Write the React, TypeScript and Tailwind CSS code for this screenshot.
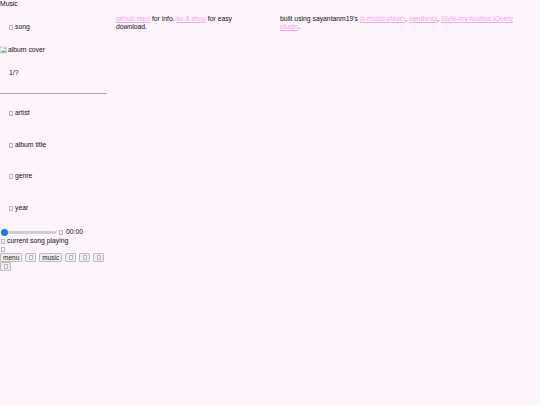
import React from 'react';

const Tofu: React.FC<{ className?: string }> = ({ className = '' }) => (
  <span className={`inline-block w-[4px] h-[5px] border-[0.8px] border-[#bdb6bd] align-[-1px] ${className}`} />
);

const BrokenImage: React.FC = () => (
  <svg width="8" height="8" viewBox="0 0 16 16" className="inline-block align-[-1px]">
    <rect x="1" y="2" width="12" height="12" fill="#eef2f6" stroke="#a8b2be" />
    <path d="M2 13 L6 8 L9 11 L11 9 L13 13 Z" fill="#5cb85c" />
    <circle cx="10" cy="5" r="1.6" fill="#6aa6dc" />
  </svg>
);

const Btn: React.FC<{ children?: React.ReactNode }> = ({ children }) => (
  <button className="h-[9px] min-w-[11px] px-[2px] bg-[#efefef] border border-[#bcbcbc] rounded-[1px] text-[6.5px] leading-[7px] text-[#222] flex items-center justify-center">
    {children ?? <Tofu />}
  </button>
);

const Field: React.FC<{ label: string; className?: string }> = ({ label, className = '' }) => (
  <div className={`flex items-center gap-[2px] pl-[9px] h-[8px] ${className}`}>
    <Tofu />
    <span>{label}</span>
  </div>
);

const linkCls = 'text-[#f3a8ef] underline';

export default function App() {
  return (
    <div
      className="w-[540px] h-[405px] bg-[#fdf4fc] text-[#111] text-[6.8px] leading-[8px] overflow-hidden"
      style={{ fontFamily: '"Liberation Sans", Arial, sans-serif' }}
    >
      <div className="h-[8px]">Music</div>
      <div className="flex">
        <div className="w-[107px] shrink-0 flex flex-col">
          <Field label="song" className="mt-[15px]" />
          <div className="mt-[15px] h-[8px] flex items-center">
            <BrokenImage />
            <span>album cover</span>
          </div>
          <div className="mt-[15px] pl-[9px] h-[8px]">1/?</div>
          <div className="mt-[16px] h-px bg-[#aaa6aa]" />
          <Field label="artist" className="mt-[15px]" />
          <Field label="album title" className="mt-[24px]" />
          <Field label="genre" className="mt-[23px]" />
          <Field label="year" className="mt-[24px]" />

          <div className="mt-[16px] flex items-center h-[8px] gap-[3px] w-[120px]">
            <input
              type="range"
              defaultValue={0}
              className="appearance-none w-[55px] h-[3px] m-0 ml-px rounded-full bg-[#cfcfcf] [&::-webkit-slider-thumb]:appearance-none [&::-webkit-slider-thumb]:w-[7px] [&::-webkit-slider-thumb]:h-[7px] [&::-webkit-slider-thumb]:rounded-full [&::-webkit-slider-thumb]:bg-[#1a73e8]"
            />
            <Tofu />
            <span>00:00</span>
          </div>
          <div className="mt-[1px] flex items-center gap-[2px] h-[8px] pl-px w-[120px]">
            <Tofu />
            <span>current song playing</span>
          </div>
          <div className="h-[8px] flex items-center pl-px">
            <Tofu />
          </div>
          <div className="flex gap-[3px] w-[120px]">
            <Btn>menu</Btn>
            <Btn />
            <Btn>music</Btn>
            <Btn />
            <Btn />
            <Btn />
          </div>
          <div className="flex">
            <Btn />
          </div>
        </div>

        <div className="ml-[9px] w-[140px] pt-[7px]">
          <a className={linkCls}>github repo</a> for info. <a className={linkCls}>ko-fi shop</a> for easy download.
        </div>

        <div className="ml-[24px] w-[245px] pt-[7px]">
          built using sayantanm19's <a className={linkCls}>js-music-player</a>, <a className={linkCls}>nerdfonts</a>,{' '}
          <a className={linkCls}>Style-my-tooltips jQuery plugin</a>.
        </div>
      </div>
    </div>
  );
}
